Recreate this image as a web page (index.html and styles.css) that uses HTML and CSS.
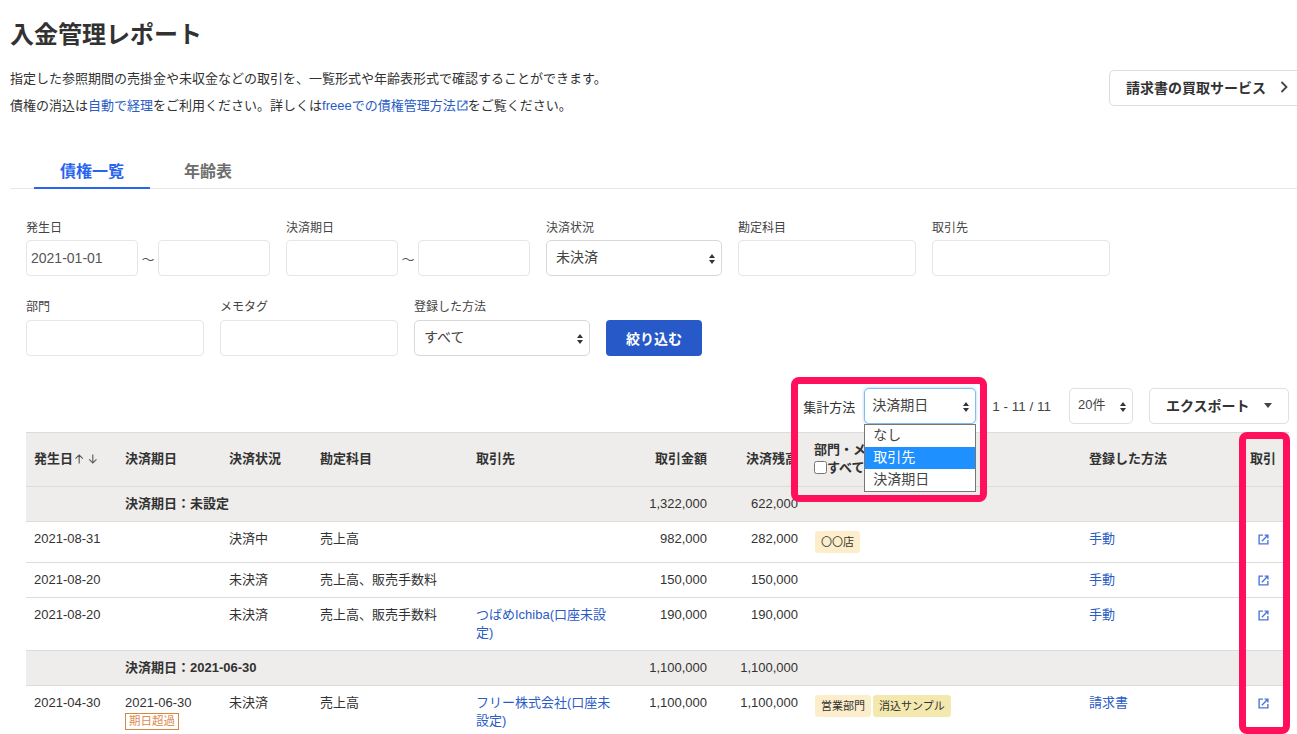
FILE: index.html
```html
<!DOCTYPE html>
<html lang="ja">

<head>
    <meta charset="UTF-8">
    <title>入金管理レポート</title>
    <link rel="stylesheet" href="styles.css">
</head>

<body>
    <h1 class="page-title">入金管理レポート</h1>
    <div class="intro">
        <div class="intro-text">
            <p>指定した参照期間の売掛金や未収金などの取引を、一覧形式や年齢表形式で確認することができます。</p>
            <p>債権の消込は<a href="#">自動で経理</a>をご利用ください。詳しくは<a href="#">freeeでの債権管理方法<svg class="ext-icon ext-inline" viewBox="0 0 12 12"><path d="M5.5 1.2H1.2v9.6h9.6V6.5M7.2 1.2h3.6v3.6M10.4 1.6 4.2 7.8"/></svg></a>をご覧ください。</p>
        </div>
        <a href="#" class="service-button">請求書の買取サービス<svg class="chevron" viewBox="0 0 8 12"><path d="M1.5 1 6.5 6l-5 5"/></svg></a>
    </div>

    <div class="tabs">
        <a href="#" class="tab tab-active">債権一覧</a>
        <a href="#" class="tab">年齢表</a>
    </div>

    <div class="content">
        <form class="filters">
            <div class="filter-row">
                <div class="field">
                    <label>発生日</label>
                    <div class="range">
                        <input type="text" class="input w-112" value="2021-01-01">
                        <span class="tilde">〜</span>
                        <input type="text" class="input w-112">
                    </div>
                </div>
                <div class="field">
                    <label>決済期日</label>
                    <div class="range">
                        <input type="text" class="input w-112">
                        <span class="tilde">〜</span>
                        <input type="text" class="input w-112">
                    </div>
                </div>
                <div class="field">
                    <label>決済状況</label>
                    <div class="select w-176">未決済<svg class="updown" viewBox="0 0 6 10"><path d="M3 0 6 4H0zM3 10 0 6h6z"/></svg></div>
                </div>
                <div class="field">
                    <label>勘定科目</label>
                    <input type="text" class="input w-178">
                </div>
                <div class="field">
                    <label>取引先</label>
                    <input type="text" class="input w-178">
                </div>
            </div>
            <div class="filter-row row-second">
                <div class="field">
                    <label>部門</label>
                    <input type="text" class="input w-178">
                </div>
                <div class="field">
                    <label>メモタグ</label>
                    <input type="text" class="input w-178">
                </div>
                <div class="field">
                    <label>登録した方法</label>
                    <div class="select w-176">すべて<svg class="updown" viewBox="0 0 6 10"><path d="M3 0 6 4H0zM3 10 0 6h6z"/></svg></div>
                </div>
                <button type="button" class="btn-primary">絞り込む</button>
            </div>
        </form>

        <div class="toolbar">
            <span class="group-label">集計方法</span>
            <div class="select select-focus">決済期日<svg class="updown" viewBox="0 0 6 10"><path d="M3 0 6 4H0zM3 10 0 6h6z"/></svg>
                <ul class="dropdown">
                    <li>なし</li>
                    <li class="selected">取引先</li>
                    <li>決済期日</li>
                </ul>
            </div>
            <span class="paging">1 - 11 / 11</span>
            <div class="select select-small">20件<svg class="updown" viewBox="0 0 6 10"><path d="M3 0 6 4H0zM3 10 0 6h6z"/></svg></div>
            <button type="button" class="btn-export">エクスポート<span class="caret"></span></button>
        </div>

        <table class="report">
            <colgroup>
                <col class="c-date"><col class="c-due"><col class="c-status"><col class="c-account"><col class="c-partner">
                <col class="c-amount"><col class="c-rest"><col class="c-tag"><col class="c-method"><col class="c-link">
            </colgroup>
            <thead>
                <tr>
                    <th>発生日<svg class="sort" viewBox="0 0 26 11"><path d="M5.5 10.5V1M1.5 5 5.5 1l4 4M20.5 .5V10M16.5 6l4 4 4-4"/></svg></th>
                    <th>決済期日</th>
                    <th>決済状況</th>
                    <th>勘定科目</th>
                    <th>取引先</th>
                    <th class="num">取引金額</th>
                    <th class="num">決済残高</th>
                    <th>部門・メモタグ<br><label class="check-all"><input type="checkbox">すべて表示</label></th>
                    <th>登録した方法</th>
                    <th class="center">取引</th>
                </tr>
            </thead>
            <tbody>
                <tr class="group">
                    <td></td>
                    <td colspan="4">決済期日：未設定</td>
                    <td class="num">1,322,000</td>
                    <td class="num">622,000</td>
                    <td colspan="3"></td>
                </tr>
                <tr>
                    <td>2021-08-31</td>
                    <td></td>
                    <td>決済中</td>
                    <td>売上高</td>
                    <td></td>
                    <td class="num">982,000</td>
                    <td class="num">282,000</td>
                    <td><div class="tags"><span class="tag">〇〇店</span></div></td>
                    <td><a href="#">手動</a></td>
                    <td class="center"><svg class="ext-icon" viewBox="0 0 12 12"><path d="M5.5 1.2H1.2v9.6h9.6V6.5M7.2 1.2h3.6v3.6M10.4 1.6 4.2 7.8"/></svg></td>
                </tr>
                <tr>
                    <td>2021-08-20</td>
                    <td></td>
                    <td>未決済</td>
                    <td>売上高、販売手数料</td>
                    <td></td>
                    <td class="num">150,000</td>
                    <td class="num">150,000</td>
                    <td></td>
                    <td><a href="#">手動</a></td>
                    <td class="center"><svg class="ext-icon" viewBox="0 0 12 12"><path d="M5.5 1.2H1.2v9.6h9.6V6.5M7.2 1.2h3.6v3.6M10.4 1.6 4.2 7.8"/></svg></td>
                </tr>
                <tr>
                    <td>2021-08-20</td>
                    <td></td>
                    <td>未決済</td>
                    <td>売上高、販売手数料</td>
                    <td class="partner"><a href="#">つばめIchiba(口座未設定)</a></td>
                    <td class="num">190,000</td>
                    <td class="num">190,000</td>
                    <td></td>
                    <td><a href="#">手動</a></td>
                    <td class="center"><svg class="ext-icon" viewBox="0 0 12 12"><path d="M5.5 1.2H1.2v9.6h9.6V6.5M7.2 1.2h3.6v3.6M10.4 1.6 4.2 7.8"/></svg></td>
                </tr>
                <tr class="group">
                    <td></td>
                    <td colspan="4">決済期日：2021-06-30</td>
                    <td class="num">1,100,000</td>
                    <td class="num">1,100,000</td>
                    <td colspan="3"></td>
                </tr>
                <tr>
                    <td>2021-04-30</td>
                    <td>2021-06-30<br><span class="overdue">期日超過</span></td>
                    <td>未決済</td>
                    <td>売上高</td>
                    <td class="partner"><a href="#">フリー株式会社(口座未設定)</a></td>
                    <td class="num">1,100,000</td>
                    <td class="num">1,100,000</td>
                    <td><div class="tags"><span class="tag">営業部門</span><span class="tag tag-sample">消込サンプル</span></div></td>
                    <td><a href="#">請求書</a></td>
                    <td class="center"><svg class="ext-icon" viewBox="0 0 12 12"><path d="M5.5 1.2H1.2v9.6h9.6V6.5M7.2 1.2h3.6v3.6M10.4 1.6 4.2 7.8"/></svg></td>
                </tr>
            </tbody>
        </table>
    </div>

    <div class="mark mark-group"></div>
    <div class="mark mark-link"></div>
</body>

</html>
```

FILE: styles.css
```css
html,
body {
    height: 734px;
    overflow: hidden;
}

body {
    position: relative;
    margin: 0;
    padding: 17px 0 0 10px;
    box-sizing: border-box;
    background: white;
    color: #323232;
    font-family: "Liberation Sans", "Noto Sans CJK JP", sans-serif;
    font-size: 13px;
}

a {
    color: #2b5cc6;
    text-decoration: none;
}

.page-title {
    margin: 0;
    font-size: 24px;
    line-height: 36px;
    font-weight: bold;
}

.intro {
    display: flex;
    justify-content: space-between;
    align-items: flex-start;
    margin-top: 12px;
}

.intro-text p {
    margin: 0;
    font-size: 13px;
    line-height: 27px;
}

.service-button {
    display: flex;
    align-items: center;
    flex-shrink: 0;
    width: 196px;
    height: 36px;
    margin: 5px -8px 0 0;
    padding: 0 0 2px 16px;
    box-sizing: border-box;
    border: 1px solid #dcdcdc;
    border-radius: 5px;
    color: #323232;
    font-size: 14px;
    font-weight: bold;
}

.chevron {
    width: 8px;
    height: 12px;
    margin-left: 14px;
    fill: none;
    stroke: #444;
    stroke-width: 1.8;
}

.ext-icon {
    width: 11px;
    height: 11px;
    fill: none;
    stroke: #4a76d4;
    stroke-width: 1.5;
    vertical-align: -2px;
}

.ext-inline {
    vertical-align: -1px;
    margin-left: 1px;
}

.tabs {
    display: flex;
    gap: 8px;
    margin-top: 30px;
    height: 39px;
    border-bottom: 1px solid #e6e6e6;
}

.tab {
    height: 38px;
    padding: 11px 26px 0;
    box-sizing: border-box;
    color: #6e6e6e;
    font-size: 16px;
    line-height: 24px;
    font-weight: bold;
}

.tab-active {
    height: 40px;
    margin-left: 24px;
    color: #2864f0;
    border-bottom: 2px solid #2864f0;
}

.content {
    padding: 31px 8px 0 16px;
}

.filters {
    display: flex;
    flex-direction: column;
    gap: 23px;
}

.filter-row {
    display: flex;
    align-items: flex-end;
    gap: 16px;
}

.field label {
    display: block;
    margin-bottom: 4px;
    font-size: 12px;
    line-height: 16px;
    color: #444;
}

.row-second .field label {
    margin-bottom: 5px;
}

.range {
    display: flex;
    align-items: center;
}

.tilde {
    width: 20px;
    text-align: center;
    font-size: 13px;
    color: #555;
}

.input {
    display: block;
    height: 36px;
    padding: 0 4px;
    box-sizing: border-box;
    border: 1px solid #e6e6e6;
    border-radius: 4px;
    color: #555;
    font-family: inherit;
    font-size: 14px;
}

.w-112 {
    width: 112px;
}

.w-176 {
    width: 176px;
}

.w-178 {
    width: 178px;
}

.select {
    position: relative;
    display: flex;
    align-items: center;
    height: 36px;
    padding: 0 0 5px 9px;
    box-sizing: border-box;
    border: 1px solid #d8d8d8;
    border-radius: 5px;
    background: white;
    font-size: 14px;
    color: #444;
}

.updown {
    position: absolute;
    right: 6px;
    top: 13px;
    width: 6px;
    height: 10px;
    fill: #333;
}

.select-focus {
    width: 112px;
    padding-left: 7px;
    border-color: #80bdf0;
    box-shadow: 0 0 3px rgba(70, 150, 240, 0.5);
}

.select-small {
    width: 64px;
    padding-left: 8px;
    margin-left: 18px;
    font-size: 13px;
    border-color: #e0e0e0;
}

.dropdown {
    position: absolute;
    top: 35px;
    left: -1px;
    width: 112px;
    margin: 0;
    padding: 0;
    box-sizing: border-box;
    list-style: none;
    border: 1px solid #767676;
    background: white;
    z-index: 5;
}

.dropdown li {
    height: 22px;
    padding-left: 8px;
    font-size: 14px;
    line-height: 21px;
    color: #444;
}

.dropdown li.selected {
    background: #1e90ff;
    color: white;
}

.btn-primary {
    width: 96px;
    height: 36px;
    border: none;
    border-radius: 4px;
    background: #2859c8;
    color: white;
    font-family: inherit;
    font-size: 14px;
    font-weight: bold;
}

.toolbar {
    display: flex;
    justify-content: flex-end;
    align-items: center;
    height: 36px;
    margin-top: 32px;
}

.group-label {
    margin-right: 9px;
    font-size: 13px;
}

.paging {
    margin-left: 16px;
    font-size: 13.5px;
    color: #444;
}

.btn-export {
    display: flex;
    align-items: center;
    justify-content: space-between;
    width: 140px;
    height: 36px;
    margin-left: 16px;
    padding: 0 16px 2px;
    box-sizing: border-box;
    border: 1px solid #e0e0e0;
    border-radius: 5px;
    background: white;
    color: #323232;
    font-family: inherit;
    font-size: 14px;
    font-weight: bold;
}

.caret {
    width: 0;
    height: 0;
    border-left: 4.5px solid transparent;
    border-right: 4.5px solid transparent;
    border-top: 5px solid #444;
}

.report {
    width: 1263px;
    margin-top: 8px;
    border-collapse: separate;
    border-spacing: 0;
    table-layout: fixed;
    line-height: 18px;
}

.c-date { width: 91px; }
.c-due { width: 104px; }
.c-status { width: 91px; }
.c-account { width: 156px; }
.c-partner { width: 147px; }
.c-amount { width: 100px; }
.c-rest { width: 91px; }
.c-tag { width: 275px; }
.c-method { width: 156px; }
.c-link { width: 52px; }

.report th,
.report td {
    padding: 8px;
    border-bottom: 1px solid #dcdcdc;
    text-align: left;
    vertical-align: top;
    font-weight: normal;
}

.report th {
    height: 37px;
    padding: 7px 8px 9px;
    background: #eeedeb;
    border-top: 1px solid #dcdcdc;
    font-weight: bold;
    vertical-align: middle;
}

.report .num {
    text-align: right;
}

.report .center {
    text-align: center;
}

.report .partner {
    padding-right: 4px;
}

.sort {
    width: 24px;
    height: 10px;
    margin-left: 1px;
    fill: none;
    stroke: #555;
    stroke-width: 1.2;
    vertical-align: -1px;
}

.check-all {
    display: flex;
    align-items: center;
    font-size: 13px;
    white-space: nowrap;
}

.check-all input {
    width: 13px;
    height: 13px;
    margin: 0;
}

.report .group td {
    background: #eeedeb;
}

.report .group td:nth-child(2) {
    font-weight: bold;
}

.tags {
    display: flex;
    gap: 2px;
    margin: 1px 0 1px 1px;
}

.tag {
    height: 22px;
    padding: 0 6px;
    box-sizing: border-box;
    border-radius: 3px;
    background: #fdeecb;
    font-size: 11px;
    line-height: 22px;
}

.tag-sample {
    background: #f3e8ae;
}

.overdue {
    display: inline-block;
    height: 17px;
    margin-top: 1px;
    padding: 0 3px;
    box-sizing: border-box;
    border: 1px solid #d9873e;
    color: #dc8a4e;
    font-size: 11.5px;
    line-height: 15px;
    vertical-align: top;
}

.mark {
    position: absolute;
    box-sizing: border-box;
    border: 7px solid #ff0f5c;
    border-radius: 8px;
}

.mark-group {
    left: 791px;
    top: 377px;
    width: 196px;
    height: 125px;
}

.mark-link {
    left: 1239px;
    top: 432px;
    width: 51px;
    height: 302px;
}
```
